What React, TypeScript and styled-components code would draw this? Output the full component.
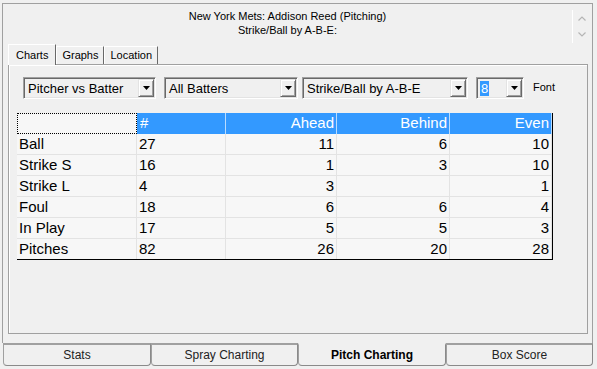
import React from "react";
import styled, { createGlobalStyle } from "styled-components";

const GlobalStyle = createGlobalStyle`
  html, body {
    margin: 0;
    padding: 0;
    background: #f0f0f0;
  }
  body {
    font-family: "Liberation Sans", Arial, sans-serif;
    color: #000;
  }
`;

const Screen = styled.div`
  width: 597px;
  height: 369px;
  box-sizing: border-box;
  padding: 3px 4px 0 2px;
  display: flex;
  flex-direction: column;
  overflow: hidden;
  background: #f0f0f0;
`;

const Frame = styled.div`
  flex: none;
  height: 340px;
  box-sizing: border-box;
  border: 1px solid #a0a0a0;
  border-bottom: none;
  display: flex;
  flex-direction: column;
`;

const Header = styled.div`
  flex: none;
  height: 40px;
  display: flex;
`;

const Title = styled.div`
  flex: 1;
  padding-top: 5px;
  text-align: center;
  font-size: 11px;
  line-height: 14px;
`;

const ScrollStrip = styled.div`
  flex: none;
  width: 16px;
  height: 33px;
  margin: 6px 4px 0 0;
  border-left: 1px solid #ffffff;
  display: flex;
  flex-direction: column;
  align-items: center;
  justify-content: space-around;
  padding-left: 3px;
  box-sizing: border-box;
`;

const TabRow = styled.div`
  flex: none;
  height: 20px;
  display: flex;
  align-items: flex-end;
  padding-left: 5px;
  position: relative;
  z-index: 1;
`;

const Tab = styled.div<{ $active?: boolean }>`
  box-sizing: border-box;
  height: ${({ $active }) => ($active ? "21px" : "18px")};
  margin-bottom: ${({ $active }) => ($active ? "-1px" : "0")};
  padding: ${({ $active }) => ($active ? "3px 7px 0 7px" : "1px 5px 0 5px")};
  border-top: 1px solid #ffffff;
  border-left: 1px solid #ffffff;
  border-right: 1px solid #696969;
  background: #f0f0f0;
  font-size: 11px;
  line-height: 14px;
  white-space: nowrap;
`;

const Page = styled.div`
  flex: none;
  height: 270px;
  margin: 0 4px 0 5px;
  box-sizing: border-box;
  border: 1px solid #a0a0a0;
  box-shadow: inset 1px 1px 0 #ffffff;
  padding: 12px 0 0 8px;
`;

const ControlRow = styled.div`
  display: flex;
  align-items: center;
  margin-left: 6px;
  height: 22px;
`;

const Combo = styled.div<{ $width: number; $gap: number }>`
  box-sizing: border-box;
  width: ${({ $width }) => $width}px;
  height: 22px;
  margin-left: ${({ $gap }) => $gap}px;
  border-top: 1px solid #a0a0a0;
  border-left: 1px solid #a0a0a0;
  border-right: 1px solid #ffffff;
  border-bottom: 1px solid #ffffff;
  box-shadow: inset 1px 1px 0 #696969, inset -1px -1px 0 #e3e3e3;
  display: flex;
  align-items: center;
  padding: 0 1px 0 3px;
  font-size: 13px;
`;

const ComboText = styled.span<{ $selected?: boolean }>`
  flex: 1;
  white-space: nowrap;
  overflow: hidden;
  span {
    background: ${({ $selected }) => ($selected ? "#3399ff" : "transparent")};
    color: ${({ $selected }) => ($selected ? "#ffffff" : "#000")};
    padding: 0 1px;
  }
`;

const ComboButton = styled.div`
  flex: none;
  width: 16px;
  height: 18px;
  box-sizing: border-box;
  border-top: 1px solid #e3e3e3;
  border-left: 1px solid #e3e3e3;
  border-right: 1px solid #696969;
  border-bottom: 1px solid #696969;
  box-shadow: inset 1px 1px 0 #ffffff, inset -1px -1px 0 #a0a0a0;
  display: flex;
  align-items: center;
  justify-content: center;
`;

const FontLabel = styled.span`
  margin-left: 9px;
  font-size: 11px;
  margin-top: -3px;
`;

const Grid = styled.div`
  margin-top: 14px;
  display: grid;
  grid-template-columns: 120px 89px 111px 113px 102px;
  width: 536px;
  box-sizing: border-box;
  border-right: 1px solid #000;
  border-bottom: 1px solid #000;
  background: #f7f7f7;
`;

const HeadCell = styled.div<{ $align?: string; $blank?: boolean }>`
  box-sizing: border-box;
  height: 21px;
  line-height: 20px;
  font-size: 15px;
  padding: 0 2px 0 3px;
  text-align: ${({ $align }) => $align || "right"};
  color: #ffffff;
  background: ${({ $blank }) => ($blank ? "#f7f7f7" : "#3399ff")};
  border-right: 1px solid ${({ $blank }) => ($blank ? "transparent" : "#b9dcff")};
  outline: ${({ $blank }) => ($blank ? "1px dotted #000" : "none")};
  outline-offset: -1px;
`;

const Cell = styled.div<{ $align?: string; $last?: boolean }>`
  box-sizing: border-box;
  height: ${({ $last }) => ($last ? "20px" : "21px")};
  line-height: 20px;
  font-size: 15px;
  padding: 0 2px;
  text-align: ${({ $align }) => $align || "left"};
  border-right: 1px solid #e3e3e3;
  border-bottom: ${({ $last }) => ($last ? "none" : "1px solid #e3e3e3")};
  white-space: nowrap;
`;

const BottomBar = styled.div`
  flex: none;
  display: flex;
  margin-left: 1px;
`;

const BottomTab = styled.div<{ $active?: boolean; $width: number }>`
  box-sizing: border-box;
  width: ${({ $width }) => $width}px;
  height: 23px;
  border-top: 2px solid ${({ $active }) => ($active ? "transparent" : "#a0a0a0")};
  border-left: 1px solid #a0a0a0;
  border-right: 1px solid #8a8a8a;
  border-bottom: 1px solid #8a8a8a;
  border-radius: 0 0 4px 4px;
  text-align: center;
  font-size: 12px;
  line-height: 20px;
  font-weight: ${({ $active }) => ($active ? "bold" : "normal")};
  color: ${({ $active }) => ($active ? "#000" : "#222")};
`;

const Chevron = ({ up }: { up?: boolean }) => (
  <svg width="8" height="5" viewBox="0 0 8 5">
    <polyline
      points={up ? "0.5,4.5 4,1 7.5,4.5" : "0.5,0.5 4,4 7.5,0.5"}
      fill="none"
      stroke="#b5b5b5"
      strokeWidth="1.2"
    />
  </svg>
);

const DownArrow = () => (
  <svg width="7" height="4" viewBox="0 0 7 4">
    <polygon points="0,0 7,0 3.5,4" fill="#000" />
  </svg>
);

const combos = [
  { text: "Pitcher vs Batter", width: 133, gap: 0 },
  { text: "All Batters", width: 134, gap: 8 },
  { text: "Strike/Ball by A-B-E", width: 166, gap: 4 },
  { text: "8", width: 48, gap: 8, selected: true },
];

const columns = ["#", "Ahead", "Behind", "Even"];

const rows: [string, string, string, string, string][] = [
  ["Ball", "27", "11", "6", "10"],
  ["Strike S", "16", "1", "3", "10"],
  ["Strike L", "4", "3", "", "1"],
  ["Foul", "18", "6", "6", "4"],
  ["In Play", "17", "5", "5", "3"],
  ["Pitches", "82", "26", "20", "28"],
];

const bottomTabs = [
  { label: "Stats", width: 148 },
  { label: "Spray Charting", width: 147 },
  { label: "Pitch Charting", width: 148, active: true },
  { label: "Box Score", width: 147 },
];

export default function App() {
  return (
    <>
      <GlobalStyle />
      <Screen>
        <Frame>
          <Header>
            <Title>
              New York Mets: Addison Reed (Pitching)
              <br />
              Strike/Ball by A-B-E:
            </Title>
            <ScrollStrip>
              <Chevron up />
              <Chevron />
            </ScrollStrip>
          </Header>
          <TabRow>
            <Tab $active>Charts</Tab>
            <Tab>Graphs</Tab>
            <Tab>Location</Tab>
          </TabRow>
          <Page>
            <ControlRow>
              {combos.map((c) => (
                <Combo key={c.text} $width={c.width} $gap={c.gap}>
                  <ComboText $selected={c.selected}>
                    <span>{c.text}</span>
                  </ComboText>
                  <ComboButton>
                    <DownArrow />
                  </ComboButton>
                </Combo>
              ))}
              <FontLabel>Font</FontLabel>
            </ControlRow>
            <Grid>
              <HeadCell $blank />
              {columns.map((col, i) => (
                <HeadCell key={col} $align={i === 0 ? "left" : "right"}>
                  {col}
                </HeadCell>
              ))}
              {rows.map((row, r) =>
                row.map((value, c) => (
                  <Cell
                    key={`${r}-${c}`}
                    $align={c > 1 ? "right" : "left"}
                    $last={r === rows.length - 1}
                  >
                    {value}
                  </Cell>
                ))
              )}
            </Grid>
          </Page>
        </Frame>
        <BottomBar>
          {bottomTabs.map((t) => (
            <BottomTab key={t.label} $active={t.active} $width={t.width}>
              {t.label}
            </BottomTab>
          ))}
        </BottomBar>
      </Screen>
    </>
  );
}
